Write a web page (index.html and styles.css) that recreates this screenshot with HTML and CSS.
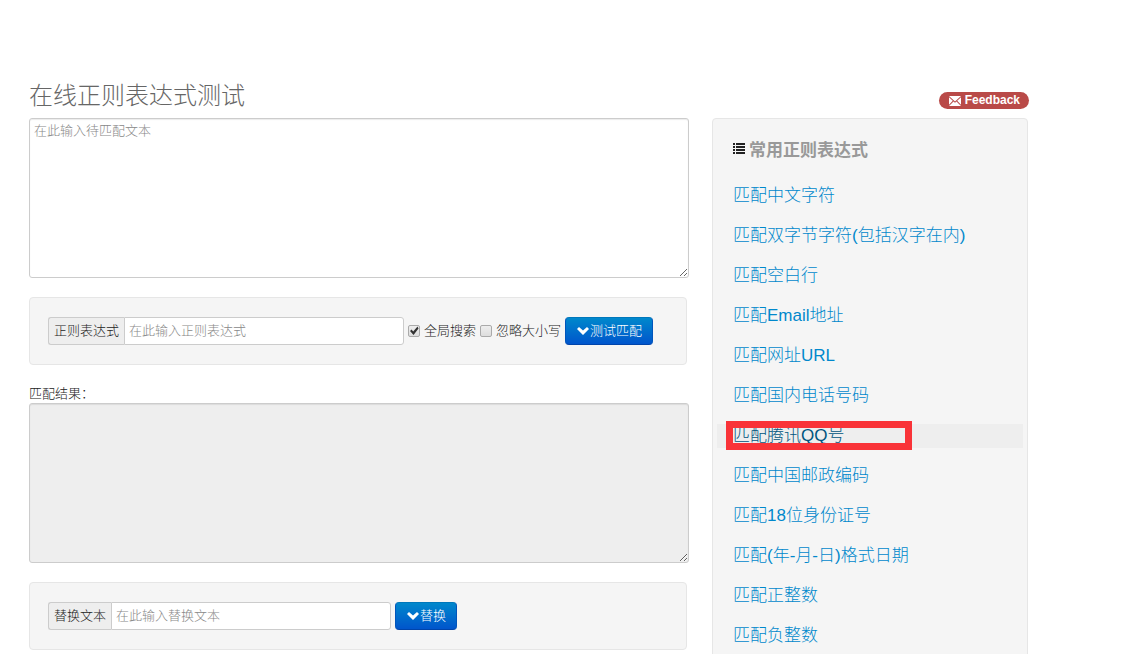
FILE: index.html
```html
<!doctype html>
<html lang="zh-CN">

<head>
    <meta charset="utf-8">
    <title>在线正则表达式测试</title>
    <link rel="stylesheet" href="styles.css">
</head>

<body>
    <div class="container">
        <header class="page-header">
            <h1>在线正则表达式测试</h1>
            <a class="badge" href="#feedback">
                <svg class="icon-envelope" width="12" height="10" viewBox="0 0 12 10" aria-hidden="true">
                    <path fill="#fff" d="M0 0h12L6 5.4zM0 1.2L3.8 4.8 0 8.7zM12 1.2v7.5L8.2 4.8zM4.5 5.4L6 6.8l1.5-1.4L12 10H0z" />
                </svg>
                Feedback
            </a>
        </header>

        <div class="row">
            <main>
                <textarea class="text-box" aria-label="待匹配文本" placeholder="在此输入待匹配文本"></textarea>

                <form class="well form-inline">
                    <div class="input-group">
                        <label class="add-on" for="regex">正则表达式</label>
                        <input class="field" type="text" id="regex" placeholder="在此输入正则表达式">
                    </div>
                    <label class="checkbox"><input type="checkbox" checked>全局搜索</label>
                    <label class="checkbox"><input type="checkbox">忽略大小写</label>
                    <button class="btn" type="button">
                        <svg width="12" height="8" viewBox="0 0 12 8" aria-hidden="true">
                            <path fill="#fff" d="M0 2L2 0l4 3.6L10 0l2 2-6 6z" />
                        </svg>测试匹配</button>
                </form>

                <label class="result-label" for="result">匹配结果：</label>
                <textarea class="text-box" id="result" readonly></textarea>

                <form class="well form-inline">
                    <div class="input-group">
                        <label class="add-on" for="replacement">替换文本</label>
                        <input class="field" type="text" id="replacement" placeholder="在此输入替换文本">
                    </div>
                    <button class="btn" type="button">
                        <svg width="12" height="8" viewBox="0 0 12 8" aria-hidden="true">
                            <path fill="#fff" d="M0 2L2 0l4 3.6L10 0l2 2-6 6z" />
                        </svg>替换</button>
                </form>
            </main>

            <aside class="sidebar">
                <h2>
                    <svg width="12" height="11" viewBox="0 0 12 11" aria-hidden="true">
                        <path fill="#222" d="M0 0h2v2H0zM3 0h9v2H3zM0 3h2v2H0zM3 3h9v2H3zM0 6h2v2H0zM3 6h9v2H3zM0 9h2v2H0zM3 9h9v2H3z" />
                    </svg>
                    常用正则表达式
                </h2>
                <ul>
                    <li><a href="#chinese">匹配中文字符</a></li>
                    <li><a href="#double-byte">匹配双字节字符(包括汉字在内)</a></li>
                    <li><a href="#blank">匹配空白行</a></li>
                    <li><a href="#email">匹配Email地址</a></li>
                    <li><a href="#url">匹配网址URL</a></li>
                    <li><a href="#phone">匹配国内电话号码</a></li>
                    <li><a class="active" href="#qq">匹配腾讯QQ号</a></li>
                    <li><a href="#postcode">匹配中国邮政编码</a></li>
                    <li><a href="#id-card">匹配18位身份证号</a></li>
                    <li><a href="#date">匹配(年-月-日)格式日期</a></li>
                    <li><a href="#positive">匹配正整数</a></li>
                    <li><a href="#negative">匹配负整数</a></li>
                </ul>
            </aside>
        </div>
    </div>
</body>

</html>
```
FILE: styles.css
```css
*,
*::before,
*::after {
    box-sizing: border-box;
}

body {
    height: 100vh;
    margin: 0;
    overflow: hidden;
    background: #fff;
    color: #222;
    font: 300 13px/20px "Liberation Sans", "Noto Sans CJK SC", sans-serif;
}

.container {
    padding: 76px 112px 0 29px;
}

.page-header {
    display: flex;
    justify-content: space-between;
    align-items: flex-start;
    height: 42px;
}

h1 {
    margin: 0;
    color: #666;
    font-size: 24px;
    font-weight: 300;
    line-height: 40px;
}

.badge {
    display: flex;
    align-items: center;
    gap: 4px;
    height: 17px;
    margin: 16px -1px 0 0;
    padding: 0 9px 0 10px;
    border-radius: 9px;
    background: #b94a48;
    color: #fff;
    font-size: 12px;
    font-weight: bold;
    line-height: 15px;
    text-decoration: none;
}

.row {
    display: grid;
    grid-template-columns: minmax(0, 660fr) minmax(0, 316fr);
    gap: 23px;
}

.text-box {
    display: block;
    width: 100%;
    height: 160px;
    padding: 2px 4px;
    border: 1px solid #ccc;
    border-radius: 3px;
    box-shadow: inset 0 1px 1px rgba(0, 0, 0, 0.08);
    font: inherit;
    resize: both;
}

.text-box[readonly] {
    background: #eee;
}

::placeholder {
    color: #888;
    opacity: 1;
}

.well {
    margin: 19px 2px 19px 0;
    padding: 19px 18px;
    border: 1px solid #e6e6e6;
    border-radius: 4px;
    background: #f5f5f5;
}

.form-inline {
    display: flex;
    flex-wrap: wrap;
    align-items: center;
    gap: 4px;
}

.input-group {
    display: flex;
    height: 28px;
}

.add-on {
    padding: 3px 5px;
    border: 1px solid #ccc;
    border-right: 0;
    border-radius: 3px 0 0 3px;
    background: #eee;
}

.field {
    width: 280px;
    padding: 0 4px;
    border: 1px solid #ccc;
    border-radius: 0 3px 3px 0;
    background: #fff;
    font: inherit;
}

.checkbox {
    display: flex;
    align-items: center;
    gap: 4px;
}

.checkbox input {
    width: 12px;
    height: 12px;
    margin: 0;
    border: 1px solid #aaa;
    border-radius: 2px;
    background: linear-gradient(#eee, #ddd);
    appearance: none;
}

.checkbox input:checked::before {
    content: "";
    display: block;
    height: 10px;
    background: #333;
    clip-path: polygon(10% 50%, 25% 35%, 42% 55%, 85% 5%, 95% 25%, 45% 90%);
}

.btn {
    display: flex;
    align-items: center;
    gap: 1px;
    height: 28px;
    padding: 0 10px 0 11px;
    border: 1px solid #0055bb;
    border-color: #0077bb #0055bb #0044aa;
    border-radius: 4px;
    background: linear-gradient(#0088cc, #0055cc);
    color: #fff;
    font: inherit;
}

.result-label {
    display: block;
    height: 19px;
}

.sidebar {
    padding: 20px 4px;
    border: 1px solid #e6e6e6;
    border-radius: 4px;
    background: #f5f5f5;
    font-size: 17px;
    line-height: 24px;
}

.sidebar h2 {
    display: flex;
    align-items: flex-start;
    gap: 4px;
    margin: 0 0 21px;
    padding: 0 16px;
    color: #999;
    font-size: 17px;
}

.sidebar h2 svg {
    margin-top: 4px;
}

.sidebar ul {
    margin: 0;
    padding: 0;
    list-style: none;
}

.sidebar li {
    margin-bottom: 16px;
}

.sidebar a {
    display: block;
    position: relative;
    padding: 0 16px;
    color: #0088cc;
    text-decoration: none;
}

.sidebar .active {
    background: #eee;
    color: #005580;
}

/* red frame over the current pattern */
.active::after {
    content: "";
    position: absolute;
    top: -3px;
    left: 9px;
    width: 186px;
    height: 29px;
    border: 7px solid #f93338;
}
```
